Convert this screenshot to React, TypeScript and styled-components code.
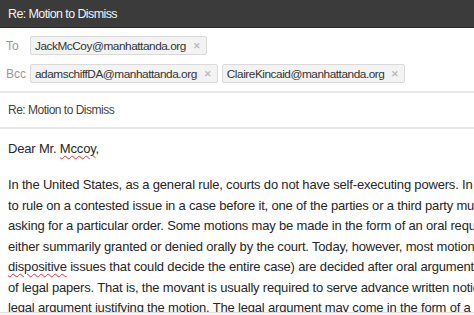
import React from "react";
import styled, { createGlobalStyle } from "styled-components";

const Global = createGlobalStyle`
  html, body { margin: 0; padding: 0; background: #fff; }
  body { font-family: "Liberation Sans", Arial, sans-serif; overflow: hidden; }
`;

const Window = styled.div`
  width: 474px;
  height: 315px;
  display: flex;
  flex-direction: column;
  overflow: hidden;
  background: #fff;
`;

const TitleBar = styled.div`
  height: 27px;
  flex: none;
  background: #3b3b3b;
  border-bottom: 1px solid #2c2c2c;
  color: #f2f2f2;
  font-size: 12.5px;
  letter-spacing: -0.6px;
  display: flex;
  align-items: center;
  padding: 0 8px;
`;

const Recipients = styled.div`
  display: flex;
  flex-direction: column;
  gap: 9px;
  padding: 8px 0 8px 6px;
  border-bottom: 2px solid #e8e8e8;
`;

const Row = styled.div`
  display: flex;
  align-items: center;
  gap: 4px;
`;

const Label = styled.span`
  width: 20px;
  color: #999;
  font-size: 12px;
`;

const Chip = styled.span`
  box-sizing: border-box;
  display: inline-flex;
  align-items: center;
  gap: 7px;
  height: 19px;
  padding: 0 5px 0 4px;
  background: #f3f3f3;
  border: 1px solid #dadada;
  border-radius: 2px;
  color: #333;
  font-size: 11.8px;
  letter-spacing: -0.45px;
`;

const Remove = styled.span`
  color: #bbb;
  font-size: 9px;
  font-weight: bold;
  letter-spacing: 0;
`;

const Subject = styled.div`
  height: 34px;
  flex: none;
  display: flex;
  align-items: center;
  padding: 0 8px;
  color: #444;
  font-size: 12px;
  letter-spacing: -0.5px;
  border-bottom: 2px solid #e8e8e8;
`;

const Body = styled.div`
  flex: 1;
  overflow: hidden;
  padding: 10px 8px 0 8px;
  color: #262626;
  font-size: 13px;
  letter-spacing: -0.18px;
`;

const Greeting = styled.div`
  line-height: 20.5px;
  margin-bottom: 15.5px;
`;

const Line = styled.div`
  white-space: nowrap;
  line-height: 20.5px;
`;

const Misspelled = styled.span`
  text-decoration: underline wavy #d33;
  text-decoration-thickness: 1px;
  text-underline-offset: 2px;
`;

const Footer = styled.div`
  height: 2px;
  flex: none;
  background: #f4f4f4;
  border-top: 1px solid #e2e2e2;
`;

const lines: React.ReactNode[] = [
  "In the United States, as a general rule, courts do not have self-executing powers. In other words, in order for the court",
  "to rule on a contested issue in a case before it, one of the parties or a third party must raise the issue by filing a motion",
  "asking for a particular order. Some motions may be made in the form of an oral request in open court, which is then",
  "either summarily granted or denied orally by the court. Today, however, most motions (especially",
  <>
    <Misspelled>dispositive</Misspelled> issues that could decide the entire case) are decided after oral argument preceded by the filing and service
  </>,
  "of legal papers. That is, the movant is usually required to serve advance written notice along with written",
  "legal argument justifying the motion. The legal argument may come in the form of a memorandum of points and authorities",
];

export default function App() {
  return (
    <Window>
      <Global />
      <TitleBar>Re: Motion to Dismiss</TitleBar>
      <Recipients>
        <Row>
          <Label>To</Label>
          <Chip>
            JackMcCoy@manhattanda.org<Remove>✕</Remove>
          </Chip>
        </Row>
        <Row>
          <Label>Bcc</Label>
          <Chip>
            adamschiffDA@manhattanda.org<Remove>✕</Remove>
          </Chip>
          <Chip>
            ClaireKincaid@manhattanda.org<Remove>✕</Remove>
          </Chip>
        </Row>
      </Recipients>
      <Subject>Re: Motion to Dismiss</Subject>
      <Body>
        <Greeting>
          Dear Mr. <Misspelled>Mccoy</Misspelled>,
        </Greeting>
        {lines.map((l, i) => (
          <Line key={i}>{l}</Line>
        ))}
      </Body>
      <Footer />
    </Window>
  );
}
